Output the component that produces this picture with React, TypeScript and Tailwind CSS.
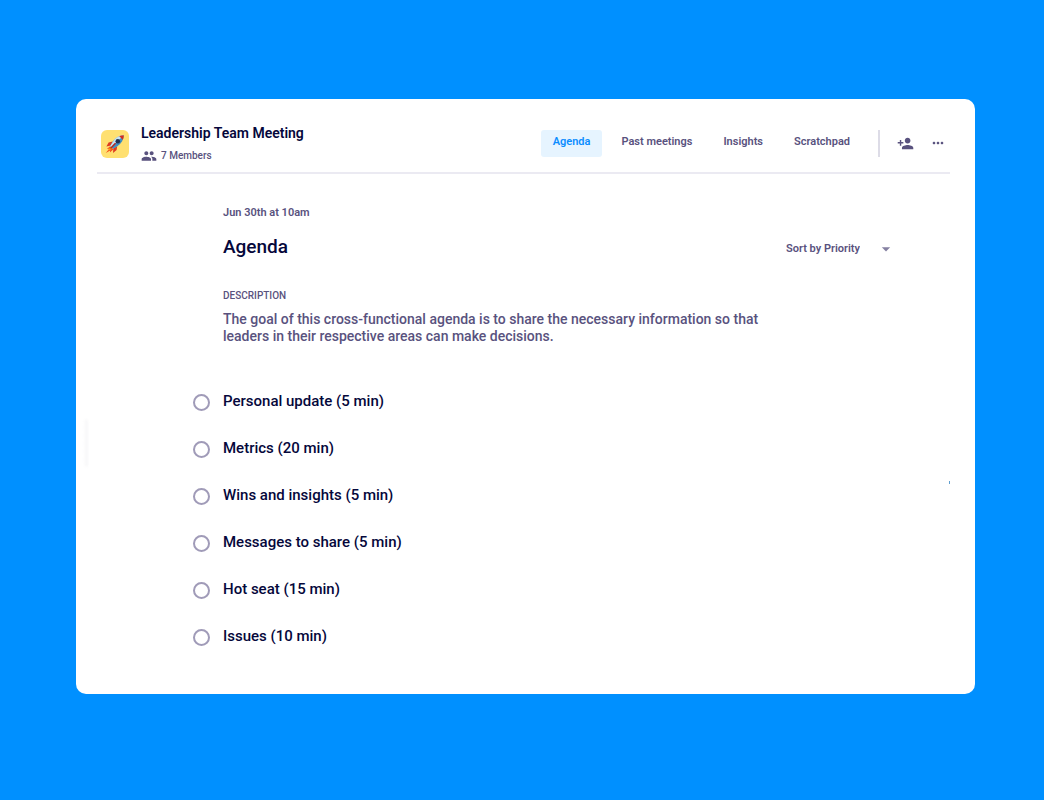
import { useState } from "react";
import { MdArrowDropDown, MdMoreHoriz, MdPeople, MdPersonAdd } from "react-icons/md";

const tabs = ["Agenda", "Past meetings", "Insights", "Scratchpad"];

const items = [
  "Personal update (5 min)",
  "Metrics (20 min)",
  "Wins and insights (5 min)",
  "Messages to share (5 min)",
  "Hot seat (15 min)",
  "Issues (10 min)",
];

function Rocket() {
  return (
    <svg viewBox="0 0 20 20" className="size-5" aria-hidden="true">
      <path d="M5.2 12.2 1.8 15l2.4-.3L.8 19l4.4-2.6-.3 2.2 3.6-3.4z" fill="#f4511e" />
      <path d="M5.4 13.2 3.2 16.6l3.9-1.9z" fill="#ffb300" />
      <path d="M7.6 7.6 3.6 8.600 1.400 12.600l4.600-1zM12.200 12.200l-.6 3.800-3.600 2.900.4-4.600z" fill="#dd3a22" />
      <path d="M18.800 1.200c-4.600.1-8.200 2.300-11 6.400L5.200 12l2.900 2.800 4.300-2.500c4-2.900 6.200-6.500 6.400-11.100z" fill="#3d8fc4" />
      <path d="M18.800 1.200c-3.600.1-6.500 1.400-9 3.900l-4.600 6.900 1.200 1.200z" fill="#c7e3f2" />
      <path d="M18.800 1.200c-1.700 0-3.200.3-4.600 1l3.600 3.600c.6-1.400 1-2.900 1-4.600z" fill="#d32f1e" />
      <circle cx="12.800" cy="7.200" r="2.300" fill="#22304f" />
      <path d="m10.200 9.500-4.300 4.600" stroke="#b3261e" strokeWidth="1.400" strokeLinecap="round" />
    </svg>
  );
}

export default function App() {
  const [tab, setTab] = useState("Agenda");

  return (
    <div className="min-h-screen bg-[#0090ff] pt-[99px] pr-[69px] pb-[106px] pl-[76px] font-['Roboto',sans-serif] font-medium text-[#59527e]">
      <main className="relative rounded-[10px] bg-white pr-[25px] pb-[35px] pl-[21px]">
        <span className="absolute top-[320px] left-[7px] h-12 w-[5px] rounded-full bg-linear-to-r from-white to-[#f6f6f7] blur-[1px]" />
        <span className="absolute top-[382px] right-[25px] h-[3px] w-px bg-[#5f9fd0]" />

        <header className="flex justify-between border-b-2 border-[#ebeaf2] pt-6 pb-2">
          <div className="flex items-start gap-3 pl-1">
            <div className="mt-[7px] flex size-7 items-center justify-center rounded-md bg-[#ffe071]">
              <Rocket />
            </div>
            <div>
              <h1 className="text-sm leading-5 font-semibold text-[#05073b]">Leadership Team Meeting</h1>
              <p className="mt-[5px] flex items-center gap-1 text-[10px] leading-4">
                <MdPeople className="size-4" aria-hidden="true" />
                7 Members
              </p>
            </div>
          </div>

          <div className="flex items-start pt-[7px]">
            <nav className="flex gap-[7px] text-[11px] font-semibold">
              {tabs.map((name) => (
                <button
                  key={name}
                  type="button"
                  onClick={() => setTab(name)}
                  className={
                    name === tab
                      ? "h-[27px] rounded-[3px] bg-[#e6f4ff] px-3 pb-[2px] text-[#0b8dff]"
                      : "h-[27px] rounded-[3px] px-3 pb-[2px]"
                  }
                >
                  {name}
                </button>
              ))}
            </nav>
            <div className="ml-4 h-[27px] w-[2px] bg-[#dddce7]" />
            <button type="button" aria-label="Add member" className="mt-[5px] ml-[17px]">
              <MdPersonAdd className="size-[17px]" />
            </button>
            <button type="button" aria-label="More options" className="mt-[5px] mr-1 ml-4">
              <MdMoreHoriz className="size-4" />
            </button>
          </div>
        </header>

        <section className="pt-[31px] pr-[54px] pl-[126px]">
          <p className="text-[11px] leading-4 font-semibold">Jun 30th at 10am</p>
          <div className="mt-4 flex items-start justify-between">
            <h2 className="text-[19px] leading-5 text-[#05073b]">Agenda</h2>
            <div className="flex items-center">
              <select
                aria-label="Sort agenda"
                className="h-6 appearance-none bg-transparent pr-5 text-[11px] font-semibold"
              >
                <option>Sort by Priority</option>
              </select>
              <MdArrowDropDown className="-ml-1 size-5 text-[#8580a2]" aria-hidden="true" />
            </div>
          </div>
          <h3 className="mt-[27px] text-[10px] leading-4">DESCRIPTION</h3>
          <p className="mt-[7px] max-w-[560px] text-sm leading-[17px]">
            The goal of this cross-functional agenda is to share the necessary information so that
            leaders in their respective areas can make decisions.
          </p>
        </section>

        <ul className="mt-8 pl-24">
          {items.map((item) => (
            <li key={item} className="flex h-[47px] items-center">
              <label className="flex items-center gap-[13px] text-[15px] leading-5 text-[#05073b]">
                <input
                  type="checkbox"
                  className="mt-[3px] size-[17px] appearance-none rounded-full border-2 border-[#a09bb8] checked:bg-[#a09bb8]"
                />
                {item}
              </label>
            </li>
          ))}
        </ul>
      </main>
    </div>
  );
}
